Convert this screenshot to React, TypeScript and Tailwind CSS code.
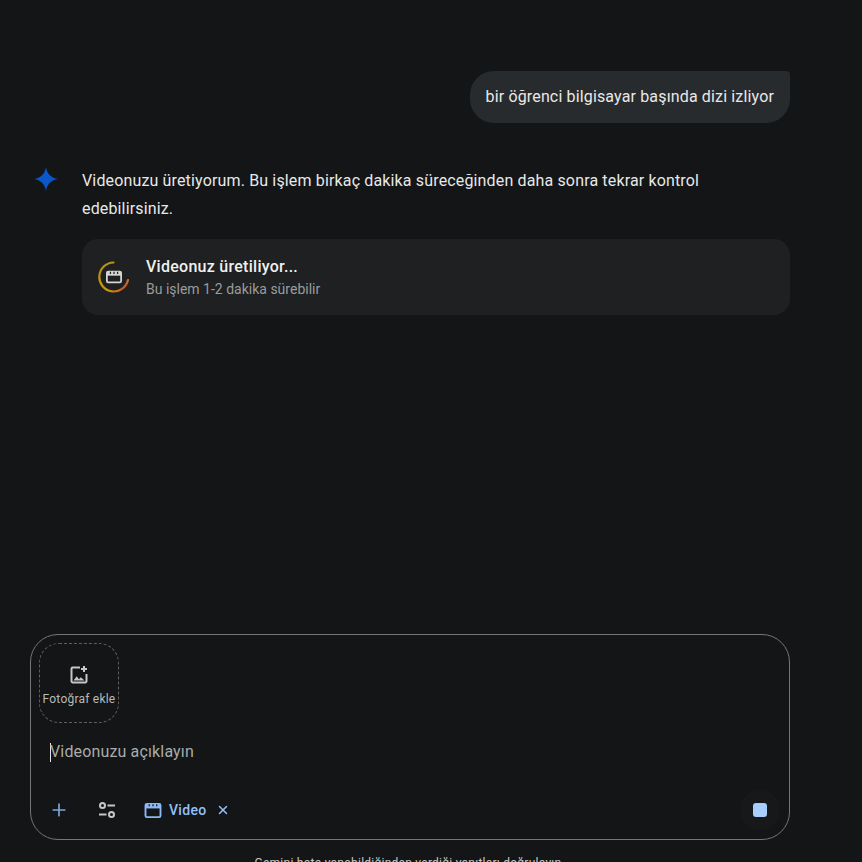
import { Plus, X } from "lucide-react";

function ClapperIcon({ className }: { className?: string }) {
  return (
    <svg viewBox="0 0 18 16" fill="none" className={className}>
      <rect x="1" y="1" width="16" height="14" rx="1.500" stroke="currentColor" strokeWidth="2" />
      <path d="M1 1h16v4.800H1z" fill="currentColor" />
      <path d="M5 1.200v2.300M9 1.200v2.300M13 1.200v2.300" stroke="#131517" strokeWidth="1.300" />
    </svg>
  );
}

function ProgressRing() {
  return (
    <div className="relative h-8 w-8 shrink-0">
      <svg viewBox="0 0 32 32" fill="none" className="absolute inset-0 h-8 w-8">
        <defs>
          <linearGradient id="ring" x1="6" y1="4" x2="30" y2="28" gradientUnits="userSpaceOnUse">
            <stop offset="0" stopColor="#b8900f" />
            <stop offset="0.6" stopColor="#c99a12" />
            <stop offset="0.85" stopColor="#cf6a1d" />
            <stop offset="1" stopColor="#a3201c" />
          </linearGradient>
        </defs>
        <path
          d="M15.500 1.500A14.500 14.500 0 1 0 30 19"
          stroke="url(#ring)"
          strokeWidth="2.200"
          strokeLinecap="round"
        />
      </svg>
      <div className="absolute inset-0 flex items-center justify-center">
        <svg viewBox="0 0 18 14" className="h-[14px] w-[16px] text-[#d6d6d4]" fill="none">
          <rect x="1" y="1" width="16" height="12" rx="1.500" stroke="currentColor" strokeWidth="2" />
          <path d="M1 1h16v4.500H1z" fill="currentColor" />
          <path d="M5 1v2.500M9 1v2.500M13 1v2.500" stroke="#1f2021" strokeWidth="1.400" />
        </svg>
      </div>
    </div>
  );
}

export default function App() {
  return (
    <div className="flex h-[862px] flex-col overflow-hidden bg-[#131517] font-['Roboto',sans-serif] text-[#e8e8e8]">
      <main className="flex flex-1 flex-col pl-[30px] pr-[72px] pt-[71px]">
        <div className="flex justify-end">
          <div className="flex h-[52px] items-center rounded-[24px] rounded-tr-[4px] bg-[#282b2d] px-4 text-[16px] tracking-[0.15px]">
            bir öğrenci bilgisayar başında dizi izliyor
          </div>
        </div>

        <div className="mt-[43px] flex">
          <div className="w-[52px] shrink-0 pt-[1px]">
            <svg viewBox="0 0 24 24" className="ml-[4px] h-6 w-6">
              <path
                d="M12 0c.9 6.600 5.400 11.100 12 12-6.600.9-11.100 5.400-12 12-.9-6.600-5.400-11.100-12-12C6.600 11.100 11.100 6.600 12 0Z"
                fill="#0b57c9"
              />
            </svg>
          </div>
          <div className="min-w-0 flex-1">
            <p className="pt-px text-[16px] leading-[28px] tracking-[0.15px]">
              Videonuzu üretiyorum. Bu işlem birkaç dakika süreceğinden daha sonra tekrar kontrol edebilirsiniz.
            </p>
            <div className="mt-4 flex h-[76px] items-center gap-4 rounded-2xl bg-[#1e2021] px-4">
              <ProgressRing />
              <div className="pt-px">
                <div className="text-[16px] font-medium leading-[22px] tracking-[0.27px] text-[#f0f0f0]">Videonuz üretiliyor...</div>
                <div className="mt-px text-[14px] leading-[20px] text-[#9a9b9c]">Bu işlem 1-2 dakika sürebilir</div>
              </div>
            </div>
          </div>
        </div>
      </main>

      <div className="ml-[30px] h-[228px] w-[760px] shrink-0">
        <div className="h-[206px] rounded-[28px] border border-[#747775] p-2">
          <div className="flex h-20 w-20 flex-col items-center justify-center rounded-[20px] border border-dashed border-[#5c5e5f] text-[#c4c7c5]">
            <svg viewBox="0 0 20 20" fill="none" className="mt-[5px] h-5 w-5">
              <path d="M11 2.500H3.500A1.500 1.500 0 0 0 2.500 3.500v13a1.500 1.500 0 0 0 1 1h13a1.500 1.500 0 0 0 1-1V9" stroke="currentColor" strokeWidth="2" />
              <path d="M15 1v6M12 4h6" stroke="currentColor" strokeWidth="2" />
              <path d="m4.500 15.500 3.200-4.300 2.300 3 1.800-2 3.700 3.300h-11Z" fill="currentColor" />
            </svg>
            <span className="mt-[6px] whitespace-nowrap text-[12px] leading-4 tracking-[0.22px] text-[#b8bab8]">Fotoğraf ekle</span>
          </div>

          <div className="mt-[17px] flex h-6 items-center pl-[11px] text-[16px] tracking-[0.15px] text-[#a9acaa]">
            <span className="h-[19px] w-px bg-[#e3e3e3]" />
            <span className="-ml-px">Videonuzu açıklayın</span>
          </div>

          <div className="mt-[34px] flex h-6 items-center pl-[10px] pr-px">
            <Plus className="h-5 w-5 text-[#7fa6d6]" strokeWidth={2} />
            <svg viewBox="0 0 18 18" fill="none" className="ml-[29px] h-[18px] w-[18px] text-[#c4c7c5]">
              <circle cx="4.500" cy="4.500" r="2.500" stroke="currentColor" strokeWidth="2" />
              <path d="M9.500 4.500h7.500M1 13.500h7.500" stroke="currentColor" strokeWidth="2" />
              <circle cx="13.500" cy="13.500" r="2.500" stroke="currentColor" strokeWidth="2" />
            </svg>
            <ClapperIcon className="ml-[28px] h-[15px] w-[18px] text-[#8ab9f5]" />
            <span className="ml-[7px] text-[14px] font-medium tracking-[0.3px] text-[#93c0fb]">Video</span>
            <X className="ml-[10px] h-[14px] w-[14px] text-[#93c0fb]" strokeWidth={2.500} />
            <div className="-my-2 ml-auto flex h-10 w-10 items-center justify-center rounded-full bg-[#16181a]">
              <div className="h-[14px] w-[14px] rounded-[3px] bg-[#a6cffd]" />
            </div>
          </div>
        </div>
        <p className="mt-[15px] pr-[4px] text-center text-[12px] leading-4 tracking-[0.25px] text-[#c4c7c5]">
          Gemini hata yapabildiğinden verdiği yanıtları doğrulayın
        </p>
      </div>
    </div>
  );
}
